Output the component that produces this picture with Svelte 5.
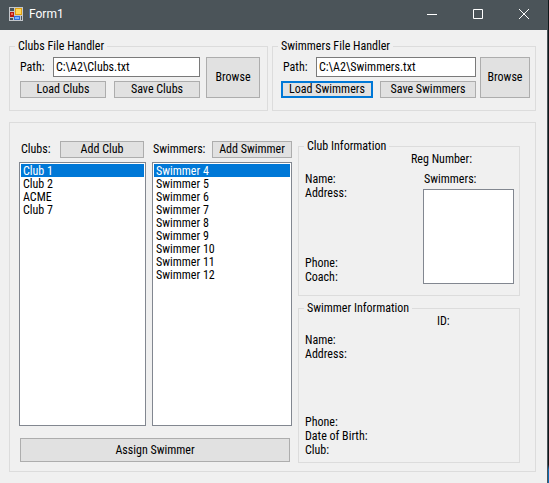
<script>
  const clubs = ['Club 1', 'Club 2', 'ACME', 'Club 7'];
  const swimmers = [4, 5, 6, 7, 8, 9, 10, 11, 12].map((n) => `Swimmer ${n}`);

  let clubsPath = $state('C:\\A2\\Clubs.txt');
  let swimmersPath = $state('C:\\A2\\Swimmers.txt');
  let club = $state('Club 1');
  let swimmer = $state('Swimmer 4');
</script>

<div class="desktop">
  <div class="window">
    <header class="titlebar">
      <svg class="app-icon" width="14" height="14" viewBox="0 0 14 14" shape-rendering="crispEdges" aria-hidden="true">
        <rect width="14" height="14" fill="#c3c7cb" />
        <rect x="1" y="1" width="4" height="3" fill="#4b5459" />
        <rect x="1" y="5" width="4" height="5" fill="#b81a10" />
        <rect x="2" y="6" width="2" height="2" fill="#ee6a55" />
        <rect x="1" y="11" width="3" height="2" fill="#4b5459" />
        <rect x="6" y="1" width="7" height="7" fill="#e0a010" />
        <rect x="7" y="2" width="5" height="5" fill="#ffd75a" />
        <rect x="5" y="9" width="6" height="4" fill="#2f6fd8" />
        <rect x="6" y="10" width="4" height="2" fill="#7fb0ff" />
        <rect x="12" y="9" width="1" height="4" fill="#4b5459" />
      </svg>
      <h1>Form1</h1>
      <div class="controls">
        <button aria-label="Minimize">
          <svg width="12" height="12" viewBox="0 0 12 12"><path d="M1 6.5h10" /></svg>
        </button>
        <button aria-label="Maximize">
          <svg width="12" height="12" viewBox="0 0 12 12"><path d="M1.5 1.5h9v9h-9z" /></svg>
        </button>
        <button aria-label="Close">
          <svg width="12" height="12" viewBox="0 0 12 12"><path d="M1 1l10 10M11 1L1 11" /></svg>
        </button>
      </div>
    </header>

    <main>
      <div class="files">
        <fieldset class="clubs-file">
          <legend>Clubs File Handler</legend>
          <div class="file-row">
            <div class="file-main">
              <div class="path">
                <label for="clubs-path">Path:</label>
                <input id="clubs-path" type="text" bind:value={clubsPath} />
              </div>
              <div class="pair">
                <button class="btn">Load Clubs</button>
                <button class="btn">Save Clubs</button>
              </div>
            </div>
            <button class="btn browse">Browse</button>
          </div>
        </fieldset>

        <fieldset class="swimmers-file">
          <legend>Swimmers File Handler</legend>
          <div class="file-row">
            <div class="file-main">
              <div class="path">
                <label for="swimmers-path">Path:</label>
                <input id="swimmers-path" type="text" bind:value={swimmersPath} />
              </div>
              <div class="pair">
                <button class="btn default">Load Swimmers</button>
                <button class="btn">Save Swimmers</button>
              </div>
            </div>
            <button class="btn browse">Browse</button>
          </div>
        </fieldset>
      </div>

      <section class="panel">
        <div class="lists">
          <div class="columns">
            <div class="column club-column">
              <div class="head">
                <label for="clubs">Clubs:</label>
                <button class="btn">Add Club</button>
              </div>
              <select id="clubs" class="tall" size="20" bind:value={club}>
                {#each clubs as name}<option value={name}>{name}</option>{/each}
              </select>
            </div>
            <div class="column swimmer-column">
              <div class="head">
                <label for="swimmers">Swimmers:</label>
                <button class="btn">Add Swimmer</button>
              </div>
              <select id="swimmers" class="tall" size="20" bind:value={swimmer}>
                {#each swimmers as name}<option value={name}>{name}</option>{/each}
              </select>
            </div>
          </div>
          <button class="btn assign">Assign Swimmer</button>
        </div>

        <div class="details">
          <fieldset>
            <legend>Club Information</legend>
            <p class="number">Reg Number:</p>
            <div class="info-body club-body">
              <div class="fields">
                <div><p>Name:</p><p>Address:</p></div>
                <div><p>Phone:</p><p>Coach:</p></div>
              </div>
              <div class="members">
                <label for="members">Swimmers:</label>
                <select id="members" size="7"></select>
              </div>
            </div>
          </fieldset>

          <fieldset>
            <legend>Swimmer Information</legend>
            <p class="number id">ID:</p>
            <div class="info-body swimmer-body">
              <div class="fields">
                <div><p>Name:</p><p>Address:</p></div>
                <div><p>Phone:</p><p>Date of Birth:</p><p>Club:</p></div>
              </div>
            </div>
          </fieldset>
        </div>
      </section>
    </main>
  </div>
</div>

<style>
  :global(body) {
    margin: 0;
  }
  .desktop {
    box-sizing: border-box;
    min-height: 100vh;
    display: flex;
    padding-right: 1px;
    background: linear-gradient(#10171a 96%, #0b6cb5 97%);
    font: 12px/13px 'Roboto Condensed', 'Arial Narrow', Roboto, sans-serif;
    color: #000;
  }
  .desktop * {
    box-sizing: border-box;
  }
  .window {
    flex: 1;
    min-width: 0;
    background: #f0f0f0;
    border: solid #4b5459;
    border-width: 0 1px 1px 0;
  }
  .titlebar {
    display: flex;
    align-items: center;
    height: 30px;
    padding: 0 0 2px 9px;
    background: #4b5459;
    color: #fff;
  }
  h1 {
    margin: 0 0 0 6px;
    font: 400 12px/16px Roboto, sans-serif;
  }
  .app-icon {
    display: block;
  }
  .controls {
    display: flex;
    align-self: stretch;
    margin-left: auto;
  }
  .controls button {
    display: grid;
    place-items: center;
    width: 46px;
    padding: 0;
    border: 0;
    background: none;
  }
  .controls path {
    fill: none;
    stroke: #fff;
  }
  main {
    padding: 10px 11px 11px 9px;
  }
  fieldset {
    min-width: 0;
    margin: 0;
    padding: 0;
    border: 1px solid #dcdcdc;
  }
  legend {
    margin-left: 5px;
    padding: 0 3px;
  }
  p {
    margin: 0;
  }
  input,
  select,
  button {
    margin: 0;
    font: inherit;
    color: inherit;
    border-radius: 0;
    outline: none;
  }
  .btn {
    height: 17px;
    padding: 0;
    border: 1px solid #adadad;
    background: #e1e1e1;
    white-space: nowrap;
  }
  .btn.default {
    border: 2px solid #0078d7;
  }
  .files {
    display: flex;
    gap: 4px;
  }
  .clubs-file {
    flex: 259 1 0;
  }
  .swimmers-file {
    flex: 264 1 0;
  }
  .file-row {
    display: flex;
    gap: 6px;
    padding: 4px 7px 12px 10px;
  }
  .swimmers-file .file-row {
    gap: 4px;
    padding: 4px 5px 12px 8px;
  }
  .file-main {
    flex: 1;
    min-width: 0;
    display: flex;
    flex-direction: column;
    gap: 4px;
  }
  .path {
    display: flex;
    align-items: center;
  }
  .path label {
    width: 33px;
    flex: none;
  }
  .swimmers-file .path label {
    width: 35px;
    padding-left: 2px;
  }
  .path input {
    flex: 1;
    min-width: 0;
    height: 20px;
    padding: 0 2px;
    border: 1px solid #7a7a7a;
    background: #fff;
  }
  .pair {
    display: flex;
    gap: 8px;
  }
  .pair .btn {
    flex: 1;
  }
  .swimmers-file .pair {
    display: grid;
    grid-template-columns: 92fr 96fr;
    gap: 7px;
  }
  .browse {
    width: 54px;
    height: auto;
  }
  .swimmers-file .browse {
    width: 50px;
  }
  .panel {
    display: flex;
    gap: 6px;
    margin-top: 11px;
    padding: 17px 15px 8px 9px;
    border: 1px solid #dcdcdc;
  }
  .lists {
    flex: 273 1 0;
    min-width: 0;
    display: flex;
    flex-direction: column;
    padding-top: 1px;
  }
  .columns {
    display: flex;
    gap: 6px;
  }
  .column {
    min-width: 0;
  }
  .club-column {
    flex: 127 1 0;
  }
  .swimmer-column {
    flex: 140 1 0;
  }
  .head {
    display: flex;
    justify-content: space-between;
    align-items: center;
    padding-left: 1px;
    margin-bottom: 4px;
  }
  .club-column .head {
    padding: 0 2px;
  }
  .club-column .btn {
    width: 84px;
  }
  .swimmer-column .btn {
    width: 80px;
  }
  select {
    display: block;
    width: 100%;
    padding: 1px;
    border: 1px solid #828790;
    background: #fff;
    overflow: hidden;
  }
  .tall {
    height: 264px;
  }
  option {
    height: 13px;
    min-height: 13px;
    padding: 0 2px;
    line-height: 13px;
  }
  option:checked {
    background: linear-gradient(#0078d7, #0078d7);
    color: #fff;
    -webkit-text-fill-color: #fff;
  }
  .assign {
    height: 24px;
    margin: 12px 2px 0 1px;
  }
  .details {
    flex: 222 1 0;
    min-width: 0;
    display: flex;
    flex-direction: column;
    gap: 6px;
  }
  .number {
    padding-left: 112px;
  }
  .number.id {
    padding-left: 138px;
  }
  .info-body {
    display: flex;
    justify-content: space-between;
    line-height: 14px;
    padding: 0 5px 0 6px;
  }
  .club-body {
    margin: 6px 0 11px;
  }
  .swimmer-body {
    height: 124px;
    margin: 5px 0;
  }
  .fields {
    display: flex;
    flex-direction: column;
    justify-content: space-between;
  }
  .members {
    width: 91px;
  }
  .members label {
    display: block;
    margin-bottom: 3px;
    padding-left: 1px;
  }
  .members select {
    height: 95px;
  }
</style>
